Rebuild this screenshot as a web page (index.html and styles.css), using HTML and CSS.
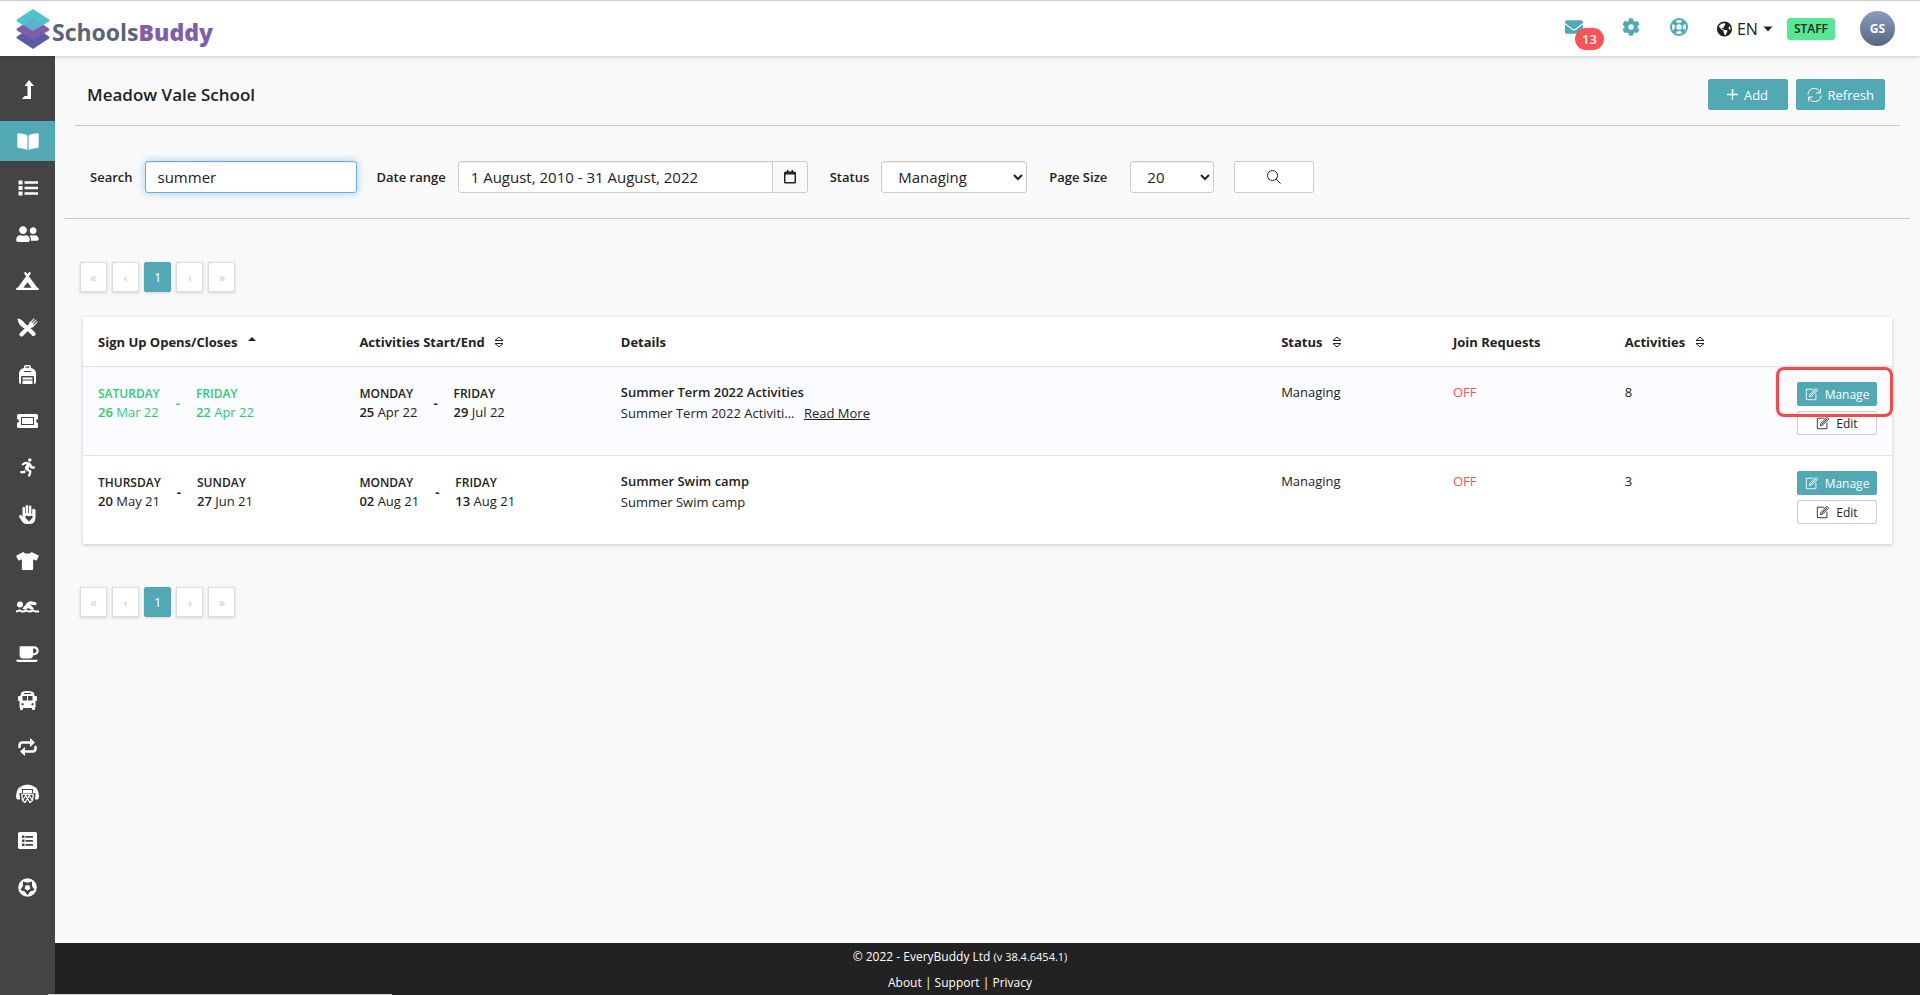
FILE: index.html
```html
<!doctype html>
<html lang="en">
    <head>
        <meta charset="UTF-8" />
        <meta name="viewport" content="width=device-width, initial-scale=1.0" />
        <title>SchoolsBuddy - Meadow Vale School</title>
        <link rel="stylesheet" href="styles.css">
    </head>
    <body>
        <!-- Shared icons -->
        <svg class="sprite" aria-hidden="true">
            <symbol id="icon-sort" viewBox="0 0 10 12">
                <path d="M1 4.500 5 1l4 3.500zM1 7.500h8L5 11z" fill="none" stroke="currentColor" stroke-linejoin="round" />
            </symbol>
            <symbol id="icon-edit" viewBox="0 0 16 16">
                <path d="M9.500 2.500h-8v12h11V7.500" />
                <path d="M5.500 8.500 12.500 1.500l2 2-7 7-2.500.6zM11 3l2 2M6.500 9.500l5-5" />
            </symbol>
        </svg>

        <header class="topbar">
            <a class="logo" href="#">
                <svg width="34" height="42" viewBox="0 0 34 42" aria-hidden="true">
                    <path d="M1 28.500 17 18l16 10.500q1 1 0 2L17 41 1 30.500q-1-1 0-2z" fill="#5f58a8" />
                    <path d="M1 20.500 17 10l16 10.500q1 1 0 2L17 32 1 22.500q-1-1 0-2z" fill="#7d5ca8" />
                    <path d="M1 11.500 17 1l16 10.500q1 1 0 2L17 23 1 13.500q-1-1 0-2z" fill="#4bc3d0" />
                    <path d="M7.500 17 17 10.500 26.500 17 17 23z" fill="#60aec8" />
                </svg>
                <span class="logo-text">Schools<b>Buddy</b></span>
            </a>
            <div class="top-actions">
                <a class="mail" href="#" aria-label="Messages">
                    <svg width="18" height="18" viewBox="0 0 512 512"><path d="M502.3 190.8c3.900-3.100 9.700-.2 9.700 4.700V400c0 26.500-21.500 48-48 48H48c-26.500 0-48-21.500-48-48V195.600c0-5 5.700-7.800 9.700-4.700 22.400 17.400 52.100 39.500 154.100 113.600 21.100 15.400 56.700 47.800 92.200 47.600 35.700.3 72-32.800 92.300-47.600 102-74.100 131.600-96.300 154-113.700zM256 320c23.200.4 56.600-29.200 73.400-41.400 132.700-96.300 142.800-104.700 173.400-128.700 5.800-4.500 9.200-11.500 9.200-18.900v-19c0-26.500-21.500-48-48-48H48c-26.500 0-48 21.500-48 48v19c0 7.400 3.400 14.300 9.200 18.900 30.600 23.900 40.700 32.400 173.400 128.700 16.800 12.200 50.200 41.800 73.400 41.400z" /></svg>
                    <span class="mail-count">13</span>
                </a>
                <a class="cog" href="#" aria-label="Settings">
                    <svg width="18" height="18" viewBox="0 0 512 512"><path d="M487.4 315.7l-42.600-24.600c4.300-23.200 4.300-47 0-70.200l42.600-24.600c4.900-2.800 7.100-8.600 5.500-14-11.100-35.600-30-67.800-54.700-94.600-3.800-4.100-10-5.100-14.800-2.300L380.800 110c-17.900-15.400-38.500-27.300-60.800-35.100V25.800c0-5.600-3.900-10.500-9.400-11.700-36.700-8.200-74.300-7.800-109.200 0-5.500 1.200-9.400 6.100-9.400 11.700V75c-22.200 7.900-42.800 19.800-60.800 35.100L88.700 85.500c-4.900-2.800-11-1.900-14.800 2.300-24.700 26.700-43.600 58.900-54.700 94.600-1.700 5.400.6 11.200 5.500 14L67.300 221c-4.300 23.200-4.300 47 0 70.200l-42.600 24.600c-4.900 2.800-7.100 8.600-5.500 14 11.100 35.600 30 67.800 54.700 94.600 3.800 4.100 10 5.100 14.800 2.300l42.600-24.600c17.900 15.400 38.500 27.300 60.800 35.100v49.200c0 5.600 3.900 10.500 9.400 11.700 36.700 8.200 74.300 7.800 109.200 0 5.500-1.200 9.400-6.100 9.400-11.700v-49.200c22.200-7.900 42.800-19.800 60.800-35.100l42.600 24.600c4.900 2.800 11 1.900 14.800-2.300 24.700-26.700 43.600-58.900 54.700-94.600 1.500-5.500-.7-11.300-5.600-14.100zM256 336c-44.100 0-80-35.900-80-80s35.900-80 80-80 80 35.900 80 80-35.900 80-80 80z" /></svg>
                </a>
                <a class="help" href="#" aria-label="Help">
                    <svg width="18" height="18" viewBox="0 0 18 18">
                        <circle cx="9" cy="9" r="8" stroke-width="2" />
                        <circle cx="9" cy="9" r="3.500" stroke-width="1.500" />
                        <path d="M3.300 3.300l3 3M14.700 3.300l-3 3M3.300 14.700l3-3M14.700 14.700l-3-3" stroke-width="4" />
                    </svg>
                </a>
                <button class="language" type="button">
                    <svg width="15" height="16" viewBox="0 0 496 512"><path d="M248 8C111.030 8 0 119.030 0 256s111.030 248 248 248 248-111.030 248-248S384.970 8 248 8zm82.290 357.600c-3.900 3.880-7.990 7.950-11.310 11.280-2.990 3-5.100 6.700-6.170 10.710-1.510 5.660-2.730 11.380-4.770 16.870l-17.390 46.850c-13.760 3-28 4.690-42.650 4.690v-27.380c1.690-12.620-7.640-36.260-22.630-51.250-6-6-9.370-14.140-9.370-22.630v-32.010c0-11.640-6.270-22.340-16.460-27.970-14.370-7.950-34.810-19.060-48.810-26.110-11.480-5.780-22.100-13.140-31.650-21.750l-.8-.72a114.800 114.800 0 0 1-18.060-20.740c-9.380-13.770-24.660-36.420-34.590-51.140 20.470-45.500 57.360-82.040 103.200-101.890l24.010 12.010C203.480 89.740 216 82.010 216 70.110v-11.300c7.990-1.290 16.120-2.110 24.390-2.420l28.300 28.300c6.250 6.250 6.250 16.380 0 22.630L264 112l-10.340 10.340c-3.120 3.120-3.120 8.190 0 11.310l4.690 4.690c3.120 3.120 3.120 8.190 0 11.310l-8 8a8 8 0 0 1-5.660 2.340h-8.990c-2.080 0-4.080.81-5.580 2.270l-9.920 9.650a8 8 0 0 0-1.580 9.310l15.590 31.190c2.660 5.320-1.210 11.580-7.150 11.580h-5.640c-1.930 0-3.790-.7-5.240-1.960l-9.280-8.060a16 16 0 0 0-15.550-3.100l-31.170 10.390a11.950 11.950 0 0 0-8.170 11.340c0 4.530 2.560 8.660 6.610 10.690l11.080 5.540c9.410 4.710 19.790 7.160 30.310 7.160s22.590 27.290 32 32h66.750c8.490 0 16.620 3.370 22.630 9.370l13.690 13.690a30.500 30.500 0 0 1 8.930 21.570 46.500 46.500 0 0 1-13.720 32.980zM417 274.250c-5.790-1.450-10.840-5-14.150-9.970l-17.980-26.970a24 24 0 0 1 0-26.620l19.590-29.380c2.320-3.470 5.500-6.290 9.240-8.150l12.980-6.490C440.200 193.590 448 223.870 448 256c0 8.670-.74 17.160-1.820 25.540L417 274.250z" /></svg>
                    <span>EN</span>
                    <svg width="10" height="6" viewBox="0 0 10 6"><path d="M.5.500h9L5 5.500z" /></svg>
                </button>
                <span class="role">STAFF</span>
                <a class="avatar" href="#">GS</a>
            </div>
        </header>

        <div class="layout">
            <nav class="sidebar">
                <a class="nav-item" href="#" aria-label="Back up">
                    <svg width="12" height="19" viewBox="0 0 12 19"><path d="M7 0l5 6H9v13H0l2.500-3H5.500V6H2.500z" /></svg>
                </a>
                <div class="nav-list">
                    <a class="nav-item active" href="#" aria-label="Activities">
                        <svg width="22" height="19" viewBox="0 0 576 512"><path d="M542.220 32.050c-54.800 3.110-163.720 14.430-230.960 55.590-4.640 2.840-7.270 7.890-7.270 13.170v363.870c0 11.550 12.630 18.850 23.280 13.490 69.180-34.820 169.230-44.320 218.700-46.920 16.890-.89 30.020-14.430 30.020-30.660V62.750c.01-17.710-15.350-31.740-33.770-30.700zM264.730 87.640C197.500 46.480 88.580 35.170 33.780 32.050 15.360 31.010 0 45.040 0 62.750V400.600c0 16.240 13.130 29.780 30.020 30.660 49.490 2.600 149.590 12.110 218.770 46.950 10.620 5.350 23.210-1.940 23.210-13.460V100.630c0-5.290-2.620-10.140-7.270-12.990z" /></svg>
                    </a>
                    <a class="nav-item" href="#" aria-label="Lists">
                        <svg width="20" height="16" viewBox="0 0 20 16"><path d="M.5.500h4v4h-4zM.5 6h4v4h-4zM.5 11.500h4v4h-4zM6.500 1.200H20v2.500H6.500zM6.500 6.800H20v2.500H6.500zM6.500 12.300H20v2.500H6.500z" /></svg>
                    </a>
                    <a class="nav-item" href="#" aria-label="People">
                        <svg width="23" height="18" viewBox="0 0 640 512"><path d="M192 256c61.900 0 112-50.100 112-112S253.900 32 192 32 80 82.100 80 144s50.100 112 112 112zm76.800 32h-8.300c-20.800 10-43.900 16-68.500 16s-47.600-6-68.500-16h-8.300C51.600 288 0 339.600 0 403.200V432c0 26.500 21.500 48 48 48h288c26.500 0 48-21.500 48-48v-28.800c0-63.600-51.600-115.200-115.200-115.200zM480 256c53 0 96-43 96-96s-43-96-96-96-96 43-96 96 43 96 96 96zm48 32h-3.800c-13.900 4.800-28.600 8-44.200 8s-30.300-3.200-44.200-8H432c-20.400 0-39.200 5.900-55.700 15.400 24.400 26.300 39.700 61.200 39.700 99.800v38.400c0 2.200-.5 4.300-.6 6.400H592c26.500 0 48-21.500 48-48 0-61.900-50.100-112-112-112z" /></svg>
                    </a>
                    <a class="nav-item" href="#" aria-label="Camps">
                        <svg width="23" height="18" viewBox="0 0 640 512"><path d="M624 448h-24.680L359.540 117.750l53.410-73.550c5.190-7.150 3.610-17.160-3.540-22.350l-25.900-18.790c-7.150-5.190-17.150-3.610-22.350 3.550L320 63.300 278.830 6.600c-5.190-7.150-15.200-8.740-22.350-3.550l-25.880 18.800c-7.150 5.190-8.740 15.200-3.540 22.350l53.410 73.550L40.680 448H16c-8.840 0-16 7.160-16 16v32c0 8.840 7.160 16 16 16h608c8.840 0 16-7.160 16-16v-32c0-8.840-7.160-16-16-16zM320 288l116.360 160H203.640L320 288z" /></svg>
                    </a>
                    <a class="nav-item" href="#" aria-label="Meals">
                        <svg width="21" height="19" viewBox="0 0 21 19">
                            <path d="M.5.500Q4 .5 8 5.500l3 3-2.500 2.500Q1 7.500.5.500z" />
                            <path d="M10 9.500l6.500 6.500M4.500 16.500 14 7" fill="none" stroke="currentColor" stroke-width="4" stroke-linecap="round" />
                            <path d="M12 7.500V5l5-4.800.6.600-3.200 3.700.6.600L19 1.500l.6.600L16 6l.6.600 3.600-3.400.6.600-4.800 5.400-3 .6z" />
                        </svg>
                    </a>
                    <a class="nav-item" href="#" aria-label="Trips">
                        <svg width="17" height="19" viewBox="0 0 17 19"><path d="M5 3V2Q5 0 7 0h3q2 0 2 2v1q5 1 5 6v8q0 2-2 2V12q0-1-1-1H3q-1 0-1 1v7q-2 0-2-2V9q0-5 5-6zm1.500-.3h4V1.500h-4zM5 6v1h7V6zM3.500 12.500h10v2h-10zM3.500 15.500h10V19h-10z" fill-rule="evenodd" /></svg>
                    </a>
                    <a class="nav-item" href="#" aria-label="Tickets">
                        <svg width="21" height="14" viewBox="0 0 21 14"><path d="M1.500 0h18Q21 0 21 1.500V5q-2 .5-2 2t2 2v3.500q0 1.500-1.500 1.500h-18Q0 14 0 12.500V9q2-.5 2-2T0 5V1.500Q0 0 1.500 0zM4 3v8h13V3zm1 1h11v6H5z" fill-rule="evenodd" /></svg>
                    </a>
                    <a class="nav-item" href="#" aria-label="Sports">
                        <svg width="15" height="19" viewBox="0 0 416 512"><path d="M272 96c26.510 0 48-21.490 48-48S298.510 0 272 0s-48 21.490-48 48 21.490 48 48 48zM113.690 317.470l-14.800 34.520H32c-17.670 0-32 14.330-32 32s14.330 32 32 32h77.450c19.250 0 36.580-11.440 44.110-29.090l8.790-20.520-10.670-6.300c-17.320-10.230-30.060-25.370-37.990-42.610zM384 223.990h-44.030l-26.060-53.250c-12.500-25.550-35.450-44.230-61.780-50.940l-71.080-21.140c-28.300-6.800-57.770-.55-80.840 17.140l-39.670 30.410c-14.030 10.750-16.690 30.830-5.940 44.860s30.840 16.690 44.860 5.940l39.690-30.410c7.670-5.890 17.440-8 25.270-6.140l14.700 4.370-37.460 87.390c-12.620 29.480-1.310 64.010 26.300 80.310l84.980 50.170-27.470 87.730c-5.280 16.860 4.110 34.820 20.970 40.090 3.190 1 6.410 1.480 9.580 1.480 13.610 0 26.230-8.770 30.520-22.450l31.640-101.060c5.910-20.770-2.890-43.080-21.640-54.390l-61.240-36.140 31.310-78.280 20.270 41.430c8 16.340 24.920 26.890 43.110 26.890H384c17.670 0 32-14.330 32-32s-14.330-31.990-32-31.990z" /></svg>
                    </a>
                    <a class="nav-item" href="#" aria-label="Volunteering">
                        <svg width="17" height="19" viewBox="0 0 17 19"><path d="M3.500 12V3q0-1.300 1.200-1.300T6 3v5h.7V1.200Q6.700 0 8 0t1.200 1.200V8h.8V1.800Q10 .6 11.200.600t1.200 1.200V9h.8V5q0-1.200 1.200-1.200T16.500 5v7q0 7-5.500 7H7q-2 0-3.500-2L.4 12.500q-.8-1.500.3-2.300t2 .2zM10 16.500l3.200-3.200q1-1.400 0-2.400t-2.400 0L10 11.600l-.8-.7q-1.400-1-2.400 0t0 2.400z" fill-rule="evenodd" /></svg>
                    </a>
                    <a class="nav-item" href="#" aria-label="Clothing">
                        <svg width="23" height="18" viewBox="0 0 640 512"><path d="M631.200 96.500L436.500 0C416.400 27.800 371.900 47.200 320 47.200S223.600 27.800 203.500 0L8.800 96.500c-7.900 4-11.100 13.600-7.200 21.500l57.200 114.500c4 7.900 13.600 11.100 21.500 7.200l56.600-27.700c10.600-5.200 23 2.500 23 14.400V480c0 17.700 14.300 32 32 32h256c17.700 0 32-14.300 32-32V226.300c0-11.800 12.400-19.600 23-14.400l56.600 27.700c7.900 4 17.500.8 21.500-7.200L638.300 118c4-7.900.8-17.600-7.100-21.500z" /></svg>
                    </a>
                    <a class="nav-item" href="#" aria-label="Swimming">
                        <svg width="23" height="18" viewBox="0 0 23 18">
                            <circle cx="4" cy="6.500" r="3" />
                            <path d="M6.500 10.500 11 5q1.500-2 4-1.800l4.500 1q1.500.8 1 2t-2 1l-4.500-.7 4 4q-1.500 1.500-3.500.8-2-1.800-4.500-.3-2 1.300-3.500-.5z" />
                            <path d="M0 13.500q2 0 3.500-1.200 2 1.600 4.200 1.200 1.500-.2 2.300-1.200 1.800 1.500 4 1.200 1.500-.2 2.500-1.200 1.500 1.300 4 1.200h2.500" fill="none" stroke="currentColor" stroke-width="2" />
                        </svg>
                    </a>
                    <a class="nav-item" href="#" aria-label="Cafe">
                        <svg width="23" height="18" viewBox="0 0 640 512"><path d="M192 384h192c53 0 96-43 96-96h32c70.600 0 128-57.400 128-128S582.600 32 512 32H120c-13.300 0-24 10.700-24 24v232c0 53 43 96 96 96zM512 96c35.300 0 64 28.700 64 64s-28.700 64-64 64h-32V96h32zm47.700 384H48.300c-47.600 0-61-64-36-64h583.300c25 0 11.800 64-35.900 64z" /></svg>
                    </a>
                    <a class="nav-item" href="#" aria-label="Transport">
                        <svg width="19" height="19" viewBox="0 0 19 19"><path d="M3 2q1-2 6.500-2T16 2l.5 3H18q1 0 1 1v3q0 1-1 1h-.5v6q0 .6-.5.600v1.400q0 1-1 1h-1q-1 0-1-1v-1H5v1q0 1-1 1H3q-1 0-1-1v-1.400q-.5 0-.5-.6v-6H1q-1 0-1-1V6q0-1 1-1h1.500zM6 2v1h7V2zM4.500 5v4.500H9V5zM10 5v4.500h4.500V5zM4.500 12a1.200 1.200 0 1 0 .1 0zM14.500 12a1.200 1.200 0 1 0 .1 0z" fill-rule="evenodd" /></svg>
                    </a>
                    <a class="nav-item" href="#" aria-label="Transfers">
                        <svg width="19" height="18" viewBox="0 0 19 18">
                            <path d="M1.500 9V7.500q0-3 3-3H14M17.500 9v1.500q0 3-3 3H5" fill="none" stroke="currentColor" stroke-width="2.500" stroke-linecap="round" />
                            <path d="M12 0l5 4.500-5 4.500zM7 18l-5-4.500L7 9z" />
                        </svg>
                    </a>
                    <a class="nav-item" href="#" aria-label="Facilities">
                        <svg width="23" height="19" viewBox="0 0 23 19">
                            <path d="M1.500 15.500Q0 15 0 11.500 1 1 11.500.500 22 1 23 11.500q0 3.500-1.500 4h-2.500l.5-5.500v-1H17V5H6v4H3.500v1l.5 5.500zM7 6h9v3H7z" fill-rule="evenodd" />
                            <path d="M5.500 10.200h12M5.700 10.500l.8 6 2.500 2 5-8M17.300 10.500l-.8 6-2.500 2-5-8M6.500 16.500l4-6M16.500 16.500l-4-6" fill="none" stroke="currentColor" stroke-width="1.300" />
                        </svg>
                    </a>
                    <a class="nav-item" href="#" aria-label="Reports">
                        <svg width="19" height="17" viewBox="0 0 19 17"><path d="M1.500 0h16Q19 0 19 1.500v14q0 1.500-1.500 1.500h-16Q0 17 0 15.500v-14Q0 0 1.500 0zM4 3.500V6h2.500V3.500zm0 4V10h2.500V7.500zm0 4V14h2.500v-2.500zM7.500 4v1.700H15V4zm0 4v1.700H15V8zm0 4v1.700H15V12z" fill-rule="evenodd" /></svg>
                    </a>
                    <a class="nav-item" href="#" aria-label="Fixtures">
                        <svg width="19" height="19" viewBox="0 0 19 19">
                            <circle cx="9.500" cy="9.500" r="9.300" />
                            <path class="star" d="M9.500 17.200 6.800 13.500 2.300 12 4.900 8.200 5 3.400 9.500 4.800 14 3.400 14.100 8.200 16.700 12 12.200 13.500z" />
                            <path d="M9.500 12.700 6.600 10.500 7.700 7.200h3.600l1.100 3.300z" />
                        </svg>
                    </a>
                </div>
            </nav>

            <div class="content">
                <main class="main">
                    <div class="page-head">
                        <h1>Meadow Vale School</h1>
                        <div class="head-buttons">
                            <button class="btn btn-primary" type="button">
                                <svg width="11" height="11" viewBox="0 0 11 11"><path d="M5.500 0v11M0 5.500h11" stroke-width="1.500" /></svg>
                                Add
                            </button>
                            <button class="btn btn-primary" type="button">
                                <svg width="15" height="14" viewBox="0 0 15 14"><path d="M1 6.500A6.200 6.200 0 0 1 13 4.500M14 7.500A6.200 6.200 0 0 1 2 9.500M13.500.500v4.500H9M1.500 13.500V9H6" /></svg>
                                Refresh
                            </button>
                        </div>
                    </div>

                    <!-- Filters -->
                    <form class="filters">
                        <label for="search">Search</label>
                        <input class="field search" type="text" id="search" name="search" value="summer" autofocus />

                        <label for="dateRange">Date range</label>
                        <div class="date-group">
                            <input class="field" type="text" id="dateRange" name="dateRange" value="1 August, 2010 - 31 August, 2022" />
                            <button class="date-button" type="button" aria-label="Pick dates">
                                <svg width="12" height="14" viewBox="0 0 12 14"><path d="M3 0h1.500v1.500h3V0H9v1.500h1.500Q12 1.500 12 3v9.500q0 1-1.500 1h-9Q0 13.500 0 12.500V3q0-1.500 1.500-1.500H3zM1.500 4.500V12h9V4.500z" fill-rule="evenodd" /></svg>
                            </button>
                        </div>

                        <label for="status">Status</label>
                        <select class="field status" id="status" name="status">
                            <option>Managing</option>
                        </select>

                        <label for="pageSize">Page Size</label>
                        <select class="field page-size" id="pageSize" name="pageSize">
                            <option>20</option>
                        </select>

                        <button class="btn search-button" type="submit" aria-label="Search">
                            <svg width="14" height="14" viewBox="0 0 14 14"><circle cx="5.500" cy="5.500" r="5" /><path d="M9 9l4.500 4.500" /></svg>
                        </button>
                    </form>

                    <div class="pager">
                        <button type="button" disabled>«</button>
                        <button type="button" disabled>‹</button>
                        <button type="button" class="current">1</button>
                        <button type="button" disabled>›</button>
                        <button type="button" disabled>»</button>
                    </div>

                    <table class="terms">
                        <thead>
                            <tr>
                                <th class="col-dates">Sign Up Opens/Closes <svg class="sorted" width="8" height="4" viewBox="0 0 8 4"><path d="M4 0l4 4H0z" /></svg></th>
                                <th class="col-dates">Activities Start/End <svg class="sort" width="10" height="12"><use href="#icon-sort" /></svg></th>
                                <th class="col-details">Details</th>
                                <th class="col-small">Status <svg class="sort" width="10" height="12"><use href="#icon-sort" /></svg></th>
                                <th class="col-small">Join Requests</th>
                                <th class="col-small">Activities <svg class="sort" width="10" height="12"><use href="#icon-sort" /></svg></th>
                                <th class="col-buttons"></th>
                            </tr>
                        </thead>
                        <tbody>
                            <tr class="highlight">
                                <td>
                                    <div class="range open">
                                        <div><span class="day">SATURDAY</span><strong>26</strong> Mar 22</div>
                                        <b>-</b>
                                        <div><span class="day">FRIDAY</span><strong>22</strong> Apr 22</div>
                                    </div>
                                </td>
                                <td>
                                    <div class="range">
                                        <div><span class="day">MONDAY</span><strong>25</strong> Apr 22</div>
                                        <b>-</b>
                                        <div><span class="day">FRIDAY</span><strong>29</strong> Jul 22</div>
                                    </div>
                                </td>
                                <td>
                                    <strong>Summer Term 2022 Activities</strong><br />
                                    Summer Term 2022 Activiti... <a class="read-more" href="#">Read More</a>
                                </td>
                                <td>Managing</td>
                                <td class="off">OFF</td>
                                <td>8</td>
                                <td class="row-buttons">
                                    <div class="callout"></div>
                                    <button class="btn btn-small btn-primary" type="button"><svg width="14" height="14"><use href="#icon-edit" /></svg>Manage</button>
                                    <button class="btn btn-small" type="button"><svg width="14" height="14"><use href="#icon-edit" /></svg>Edit</button>
                                </td>
                            </tr>
                            <tr>
                                <td>
                                    <div class="range">
                                        <div><span class="day">THURSDAY</span><strong>20</strong> May 21</div>
                                        <b>-</b>
                                        <div><span class="day">SUNDAY</span><strong>27</strong> Jun 21</div>
                                    </div>
                                </td>
                                <td>
                                    <div class="range">
                                        <div><span class="day">MONDAY</span><strong>02</strong> Aug 21</div>
                                        <b>-</b>
                                        <div><span class="day">FRIDAY</span><strong>13</strong> Aug 21</div>
                                    </div>
                                </td>
                                <td>
                                    <strong>Summer Swim camp</strong><br />
                                    Summer Swim camp
                                </td>
                                <td>Managing</td>
                                <td class="off">OFF</td>
                                <td>3</td>
                                <td class="row-buttons">
                                    <button class="btn btn-small btn-primary" type="button"><svg width="14" height="14"><use href="#icon-edit" /></svg>Manage</button>
                                    <button class="btn btn-small" type="button"><svg width="14" height="14"><use href="#icon-edit" /></svg>Edit</button>
                                </td>
                            </tr>
                        </tbody>
                    </table>

                    <div class="pager">
                        <button type="button" disabled>«</button>
                        <button type="button" disabled>‹</button>
                        <button type="button" class="current">1</button>
                        <button type="button" disabled>›</button>
                        <button type="button" disabled>»</button>
                    </div>
                </main>

                <footer class="footer">
                    <div>© 2022 - EveryBuddy Ltd <small>(v 38.4.6454.1)</small></div>
                    <div><a href="#">About</a> | <a href="#">Support</a> | <a href="#">Privacy</a></div>
                </footer>
            </div>
        </div>
    </body>
</html>
```

FILE: styles.css
```css
* {
    box-sizing: border-box;
}
body {
    font-family: "Open Sans", "Noto Sans", sans-serif;
    font-size: 13px;
    color: #222;
    background-color: #f9f9f9;
    margin: 0;
    min-height: 100vh;
    display: flex;
    flex-direction: column;
}
/* Thin strip along the bottom of the window */
body::after {
    content: "";
    position: fixed;
    left: 48px;
    bottom: 0;
    z-index: 3;
    width: 344px;
    height: 1px;
    background-color: #ccc;
}
a {
    color: inherit;
    text-decoration: none;
}
svg {
    display: block;
    fill: currentColor;
}
button,
input,
select {
    font-family: inherit;
    color: inherit;
}
button {
    cursor: pointer;
}
strong {
    font-weight: 600;
}
.sprite {
    position: absolute;
    width: 0;
    height: 0;
}

/* Top bar */
.topbar {
    position: relative;
    z-index: 2;
    display: flex;
    justify-content: space-between;
    align-items: center;
    height: 56px;
    padding: 0 25px 0 16px;
    background-color: #fff;
    border-top: 1px solid #ccc;
    box-shadow: 0 1px 4px rgba(0, 0, 0, 0.2);
}
.logo {
    display: flex;
    align-items: center;
    gap: 2px;
}
.logo-text {
    font-size: 23px;
    font-weight: 700;
    line-height: 32px;
    color: #5c6478;
    padding-top: 6px;
}
.logo-text b {
    color: #7f5fab;
}
.top-actions {
    display: flex;
    align-items: center;
    color: #50a9b5;
}
.mail,
.cog,
.help {
    margin-bottom: 3px;
}
.mail {
    position: relative;
    margin-right: 39px;
}
.mail-count {
    position: absolute;
    left: 10px;
    top: 10px;
    padding: 0 7px;
    font-size: 13px;
    font-weight: 600;
    line-height: 22px;
    color: #fff;
    background-color: #ff5154;
    border-radius: 11px;
}
.cog {
    margin-right: 30px;
}
.help svg {
    fill: none;
    stroke: currentColor;
}
.language {
    display: flex;
    align-items: center;
    gap: 5px;
    margin: 0 14px 0 29px;
    padding: 0;
    font-size: 16px;
    line-height: 22px;
    color: #222;
    background: none;
    border: none;
}
.role {
    padding: 0 7px;
    font-size: 12px;
    font-weight: 600;
    line-height: 22px;
    color: #222;
    background-color: #55e894;
    border-radius: 3px;
}
.avatar {
    width: 35px;
    margin-left: 25px;
    font-size: 12px;
    font-weight: 700;
    line-height: 35px;
    text-align: center;
    color: #fff;
    background: linear-gradient(#8b9dc0, #566580);
    border-radius: 50%;
}

/* Sidebar */
.layout {
    flex: 1;
    display: flex;
}
.sidebar {
    flex: none;
    display: flex;
    flex-direction: column;
    width: 55px;
    padding: 13px 0 88px;
    color: #fff;
    background-color: #444;
}
.nav-list {
    flex: 1;
    display: flex;
    flex-direction: column;
    justify-content: space-between;
    margin-top: 12px;
}
.nav-item {
    display: flex;
    align-items: center;
    justify-content: center;
    height: 40px;
}
.nav-item.active {
    background-color: #50a9b5;
}
.star {
    fill: #444;
}

/* Page */
.content {
    flex: 1;
    display: flex;
    flex-direction: column;
}
.main {
    flex: 1;
    padding: 0 10px;
}
.page-head {
    display: flex;
    justify-content: space-between;
    align-items: center;
    height: 70px;
    margin: 0 10px;
    padding: 8px 15px 0 12px;
    border-bottom: 1px solid #c8c8c8;
}
h1 {
    margin: 0;
    font-size: 17px;
    font-weight: 600;
}
.head-buttons {
    display: flex;
    gap: 8px;
}
.btn {
    display: flex;
    align-items: center;
    justify-content: center;
    gap: 6px;
    min-width: 80px;
    height: 31px;
    padding: 0 10px;
    font-size: 13px;
    background-color: #fff;
    border: 1px solid #ccc;
    border-radius: 2px;
}
.btn svg {
    fill: none;
    stroke: currentColor;
}
.btn-primary {
    color: #fff;
    background-color: #50a9b5;
    border-color: #50a9b5;
}

/* Filters */
.filters {
    display: flex;
    align-items: center;
    padding: 35px 25px 25px;
    border-bottom: 1px solid #c8c8c8;
}
.filters label {
    margin-right: 12px;
    font-weight: 600;
}
.field {
    height: 32px;
    padding: 0 12px;
    font-size: 15px;
    background-color: #fff;
    border: 1px solid #ccc;
    border-radius: 3px;
    box-shadow: inset 0 1px 1px rgba(0, 0, 0, 0.08);
}
.search {
    width: 212px;
    margin-right: 20px;
}
.search:focus {
    outline: none;
    border-color: #66afe9;
    box-shadow: inset 0 1px 1px rgba(0, 0, 0, 0.08), 0 0 8px rgba(102, 175, 233, 0.6);
}
.date-group {
    display: flex;
    width: 350px;
    margin-right: 22px;
}
.date-group .field {
    flex: 1;
    min-width: 0;
    border-radius: 3px 0 0 3px;
}
.date-button {
    display: flex;
    align-items: center;
    justify-content: center;
    width: 36px;
    margin-left: -1px;
    padding: 0;
    background-color: #f9f9f9;
    border: 1px solid #ccc;
    border-radius: 0 3px 3px 0;
}
.status {
    width: 146px;
    margin-right: 22px;
}
.page-size {
    width: 84px;
    margin: 0 20px 0 11px;
}
.search-button {
    height: 32px;
}

/* Pager */
.pager {
    display: flex;
    gap: 5px;
    margin: 43px 15px 25px;
}
.pager button {
    min-width: 27px;
    height: 30px;
    padding: 0 9px;
    font-size: 13px;
    background-color: #fff;
    border: 1px solid #ddd;
    box-shadow: 0 1px 3px rgba(0, 0, 0, 0.15);
}
.pager button:disabled {
    color: #ccc;
}
.pager .current {
    color: #fff;
    background-color: #50a9b5;
    border-color: #50a9b5;
    border-radius: 2px;
}

/* Table */
.terms {
    width: calc(100% - 36px);
    margin: 0 18px;
    table-layout: fixed;
    border-spacing: 0;
    background-color: #fff;
    box-shadow: 0 1px 4px rgba(0, 0, 0, 0.2);
}
.terms th {
    height: 49px;
    padding: 0 15px;
    font-weight: 700;
    text-align: left;
}
.terms td {
    height: 89px;
    padding: 15px;
    line-height: 21px;
    vertical-align: top;
    border-top: 1px solid #d8e6f3;
}
.terms th svg {
    display: inline-block;
}
.sorted {
    margin: 0 0 6px 7px;
}
.sort {
    margin-left: 6px;
    vertical-align: -1px;
}
.highlight {
    background-color: #fbfcff;
}
.col-dates {
    width: 14.45%;
}
.col-small {
    width: 9.5%;
}
.col-buttons {
    width: 6.1%;
}
.range {
    display: flex;
    align-items: center;
    gap: 16px;
    padding-top: 2px;
    line-height: 19px;
}
.day {
    display: block;
    font-size: 12px;
    font-weight: 600;
}
.open {
    color: #2ecc71;
}
.read-more {
    margin-left: 6px;
    text-decoration: underline;
}
.off {
    color: #ff5154;
}
.terms .row-buttons {
    position: relative;
}
.btn-small {
    width: 80px;
    height: 24px;
    margin: 0 0 5px auto;
    padding: 0;
    font-size: 12px;
}

/* Red outline around the first Manage button */
.callout {
    position: absolute;
    top: 0;
    right: -1px;
    width: 117px;
    height: 50px;
    border: 3px solid #ff4646;
    border-radius: 8px;
    pointer-events: none;
}

/* Footer, centred on the window rather than on the content column */
.footer {
    display: flex;
    flex-direction: column;
    gap: 8px;
    padding: 5px 55px 3px 0;
    font-size: 12px;
    line-height: 18px;
    text-align: center;
    color: #fff;
    background-color: #222;
}
.footer small {
    font-size: 11px;
}
```
